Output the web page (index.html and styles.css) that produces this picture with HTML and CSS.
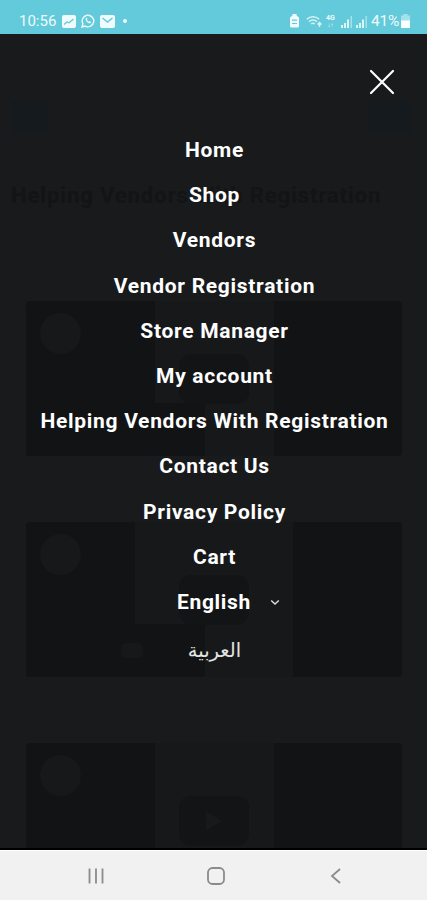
FILE: index.html
```html
<!DOCTYPE html>
<html lang="en">
<head>
    <meta charset="UTF-8">
    <meta name="viewport" content="width=device-width, initial-scale=1.0">
    <title>Helping Vendors With Registration</title>
    <link rel="stylesheet" href="styles.css">
</head>
<body>

    <header class="status-bar">
        <div class="status-left">
            <span class="clock">10:56</span>
            <svg width="14" height="13" viewBox="0 0 14 13"><rect width="14" height="13" rx="2" fill="#effbfd"/><path d="M2 9.500l3-2.500 2 .8L11.500 4" fill="none" stroke="#62cada" stroke-width="1.300"/></svg>
            <svg width="14" height="14" viewBox="0 0 14 14" fill="none" stroke="#effbfd"><path d="M1 13l.9-3.2A5.8 5.8 0 1 1 4.200 12.100z" stroke-width="1.400"/><path d="M4.700 4.200c-.6 2.600 2.500 5.700 5 5l.3-1.300-1.500-.8-.8.7C6.800 7.300 6.300 6.800 6 6l.6-.7-.7-1.500z" fill="#effbfd" stroke="none"/></svg>
            <svg width="15" height="13" viewBox="0 0 15 13"><rect width="15" height="13" rx="2" fill="#effbfd"/><path d="M2.500 3l5 4 5-4" fill="none" stroke="#62cada" stroke-width="1.500"/></svg>
            <span class="dot"></span>
        </div>
        <div class="status-right">
            <svg width="11" height="14" viewBox="0 0 11 14"><path d="M3.500 0h4v1.500L10 3.500V12a1.500 1.500 0 0 1-1.500 1.500h-6A1.500 1.500 0 0 1 1 12V3.500l2.500-2z" fill="#effbfd"/><path d="M3 6.200h5M3 9.500h5" stroke="#62cada" stroke-width="1.200"/></svg>
            <svg class="wifi" width="16" height="13" viewBox="0 0 16 13" fill="none" stroke="#d5f2f6" stroke-width="1.500"><path d="M.8 4.200a9 9 0 0 1 12.400 0M3 6.700a5.800 5.800 0 0 1 8 0M5.200 9a2.800 2.800 0 0 1 3.600 0"/><path d="M13.500 12V7.500M11.500 9.500l2-2 2 2"/></svg>
            <span class="network">4G<small>↓↑</small></span>
            <svg class="signal" width="12" height="13" viewBox="0 0 12 13"><path d="M0 10h2v3H0zM3 8h2v5H3zM6 4.500h2V13H6z" fill="#dff6f9"/><path d="M9.500 1h1.500v12H9.500z" fill="#a5e1ea"/></svg>
            <svg class="signal" width="12" height="13" viewBox="0 0 12 13"><path d="M0 10h2v3H0zM3 8h2v5H3zM6 4.500h2V13H6z" fill="#dff6f9"/><path d="M9.500 1h1.500v12H9.500z" fill="#a5e1ea"/></svg>
            <span class="battery-level">41%</span>
            <svg width="9" height="14" viewBox="0 0 9 14"><path d="M2.500 0h4v1.500H9V13a1 1 0 0 1-1 1H1a1 1 0 0 1-1-1V1.500h2.500z" fill="#a5e1ea"/><path d="M0 6.500h9V13a1 1 0 0 1-1 1H1a1 1 0 0 1-1-1z" fill="#f7feff"/></svg>
        </div>
    </header>

    <div class="screen">
        <!-- Dimmed page behind the menu -->
        <main class="page" aria-hidden="true">
            <div class="toolbar">
                <span class="tile"></span>
                <span class="tile tile-wide"></span>
            </div>
            <h1>Helping Vendors With Registration</h1>
            <div class="videos">
                <div class="video">
                    <span class="avatar"></span>
                    <span class="thumb"><span class="play"></span></span>
                    <span class="caption"></span>
                </div>
                <div class="video">
                    <span class="avatar"></span>
                    <span class="thumb thumb-wide"><span class="play"></span></span>
                    <span class="caption"><span class="badge"></span></span>
                </div>
                <div class="video">
                    <span class="avatar"></span>
                    <span class="thumb"><span class="play"><svg width="16" height="20" viewBox="0 0 16 20"><path d="M0 0l16 10L0 20z" fill="#18191b"/></svg></span></span>
                </div>
            </div>
        </main>

        <nav class="menu">
            <button class="close" aria-label="Close">
                <svg width="26" height="26" viewBox="0 0 26 26"><path d="M2 2l22 22M24 2L2 24" stroke="#fff" stroke-width="2.200" stroke-linecap="round"/></svg>
            </button>
            <ul>
                <li><a href="#">Home</a></li>
                <li><a href="#">Shop</a></li>
                <li><a href="#">Vendors</a></li>
                <li><a href="#">Vendor Registration</a></li>
                <li><a href="#">Store Manager</a></li>
                <li><a href="#">My account</a></li>
                <li><a href="#">Helping Vendors With Registration</a></li>
                <li><a href="#">Contact Us</a></li>
                <li><a href="#">Privacy Policy</a></li>
                <li><a href="#">Cart</a></li>
                <li class="language">
                    <a href="#">English</a>
                    <svg width="10" height="7" viewBox="0 0 10 7"><path d="M1.200 1.500L5 5l3.800-3.500" fill="none" stroke="#ddd" stroke-width="1.500"/></svg>
                </li>
                <li class="arabic"><a href="#" lang="ar" dir="rtl">العربية</a></li>
            </ul>
        </nav>
    </div>

    <footer class="nav-bar">
        <svg width="18" height="18" viewBox="0 0 18 18"><path d="M2.500 1.500v15M9 1.500v15M15.500 1.500v15" stroke="#8b8b8b" stroke-width="1.800"/></svg>
        <svg width="18" height="18" viewBox="0 0 18 18"><rect x="1" y="1" width="16" height="16" rx="4.500" fill="none" stroke="#8b8b8b" stroke-width="1.800"/></svg>
        <svg width="18" height="18" viewBox="0 0 18 18"><path d="M13 2L5 9l8 7" fill="none" stroke="#8b8b8b" stroke-width="1.800"/></svg>
    </footer>

</body>
</html>
```
FILE: styles.css
```css
:root {
    --status: #62cada;
    --overlay: #181a1b;
    --card: #121315;
    --thumb: #17181a;
}

* {
    box-sizing: border-box;
}

body {
    margin: 0;
    height: 900px;
    display: flex;
    flex-direction: column;
    font-family: Roboto, "Noto Sans", sans-serif;
    background: var(--overlay);
    overflow: hidden;
}

/* Status bar */
.status-bar {
    height: 34px;
    padding: 8px 17px 0 19px;
    display: flex;
    justify-content: space-between;
    align-items: center;
    background: var(--status);
    color: #effbfd;
    flex-shrink: 0;
}

.status-left,
.status-right {
    display: flex;
    align-items: center;
}

.status-left {
    gap: 5px;
}

.clock {
    width: 38px;
    font-size: 15px;
    white-space: nowrap;
}

.dot {
    width: 4px;
    height: 4px;
    margin-left: 3px;
    border-radius: 50%;
    background: #effbfd;
}

.wifi {
    margin-left: 6px;
}

.network {
    display: flex;
    flex-direction: column;
    align-items: center;
    width: 9px;
    margin: 0 6px 0 4px;
    font-size: 7px;
    line-height: 7px;
    font-weight: 700;
}

.network small {
    font-size: 6px;
    line-height: 6px;
}

.signal {
    margin-right: 3px;
}

.battery-level {
    width: 30px;
    font-size: 15.5px;
    letter-spacing: -0.2px;
}

/* Page and menu */
.screen {
    position: relative;
    height: 816px;
    overflow: hidden;
    border-bottom: 2px solid #000;
    flex-shrink: 0;
}

.page {
    padding-top: 67px;
}

.toolbar {
    display: flex;
    justify-content: space-between;
    padding: 0 16px 0 12px;
}

.tile {
    width: 36px;
    height: 32px;
    border-radius: 4px;
    background: #141a1d;
}

.tile-wide {
    width: 42px;
}

.page h1 {
    margin: 47px 0 0 11px;
    font-size: 22px;
    line-height: 32px;
    letter-spacing: 0.9px;
    white-space: nowrap;
    color: #121516;
}

.videos {
    display: flex;
    flex-direction: column;
    gap: 66px;
    margin: 89px 25px 0 26px;
}

.video {
    display: flex;
    position: relative;
    justify-content: center;
    height: 155px;
    background: var(--card);
    border-radius: 4px;
}

.avatar {
    position: absolute;
    left: 14px;
    top: 12px;
    width: 41px;
    height: 41px;
    border-radius: 50%;
    background: var(--thumb);
}

.thumb {
    display: flex;
    justify-content: center;
    align-items: center;
    width: 119px;
    background: var(--thumb);
}

.thumb-wide {
    width: 158px;
}

.play {
    display: flex;
    justify-content: center;
    align-items: center;
    width: 70px;
    height: 50px;
    border-radius: 12px;
    background: #131416;
}

.caption {
    position: absolute;
    left: 0;
    bottom: 0;
    display: flex;
    align-items: center;
    width: 179px;
    height: 53px;
    background: var(--card);
}

.badge {
    width: 22px;
    height: 15px;
    margin-left: 95px;
    border-radius: 5px;
    background: var(--thumb);
}

.menu {
    position: absolute;
    inset: 0;
    display: flex;
    flex-direction: column;
}

.close {
    align-self: flex-end;
    display: flex;
    margin: 35px 32px 0 0;
    padding: 0;
    border: 0;
    background: none;
}

.menu ul {
    margin: 33px 0 0;
    padding: 0 0 0 2px;
    list-style: none;
    text-align: center;
}

.menu li {
    height: 45.2px;
    line-height: 45.2px;
}

.menu a {
    color: #fff;
    font-size: 21px;
    font-weight: 700;
    letter-spacing: 0.7px;
    text-decoration: none;
}

.menu .language {
    display: flex;
    justify-content: center;
    align-items: center;
    gap: 19px;
    padding-left: 28px;
}

.menu .arabic {
    padding-top: 3px;
}

.menu .arabic a {
    font-family: "DejaVu Sans", sans-serif;
    font-size: 19.5px;
    font-weight: 400;
    letter-spacing: 0;
    color: #e4e4e4;
}

/* Android navigation */
.nav-bar {
    height: 50px;
    display: flex;
    justify-content: space-between;
    align-items: center;
    padding: 1px 82px 0 87px;
    background: #f1f1f1;
    border-top: 1px solid #fff;
    flex-shrink: 0;
}
```
